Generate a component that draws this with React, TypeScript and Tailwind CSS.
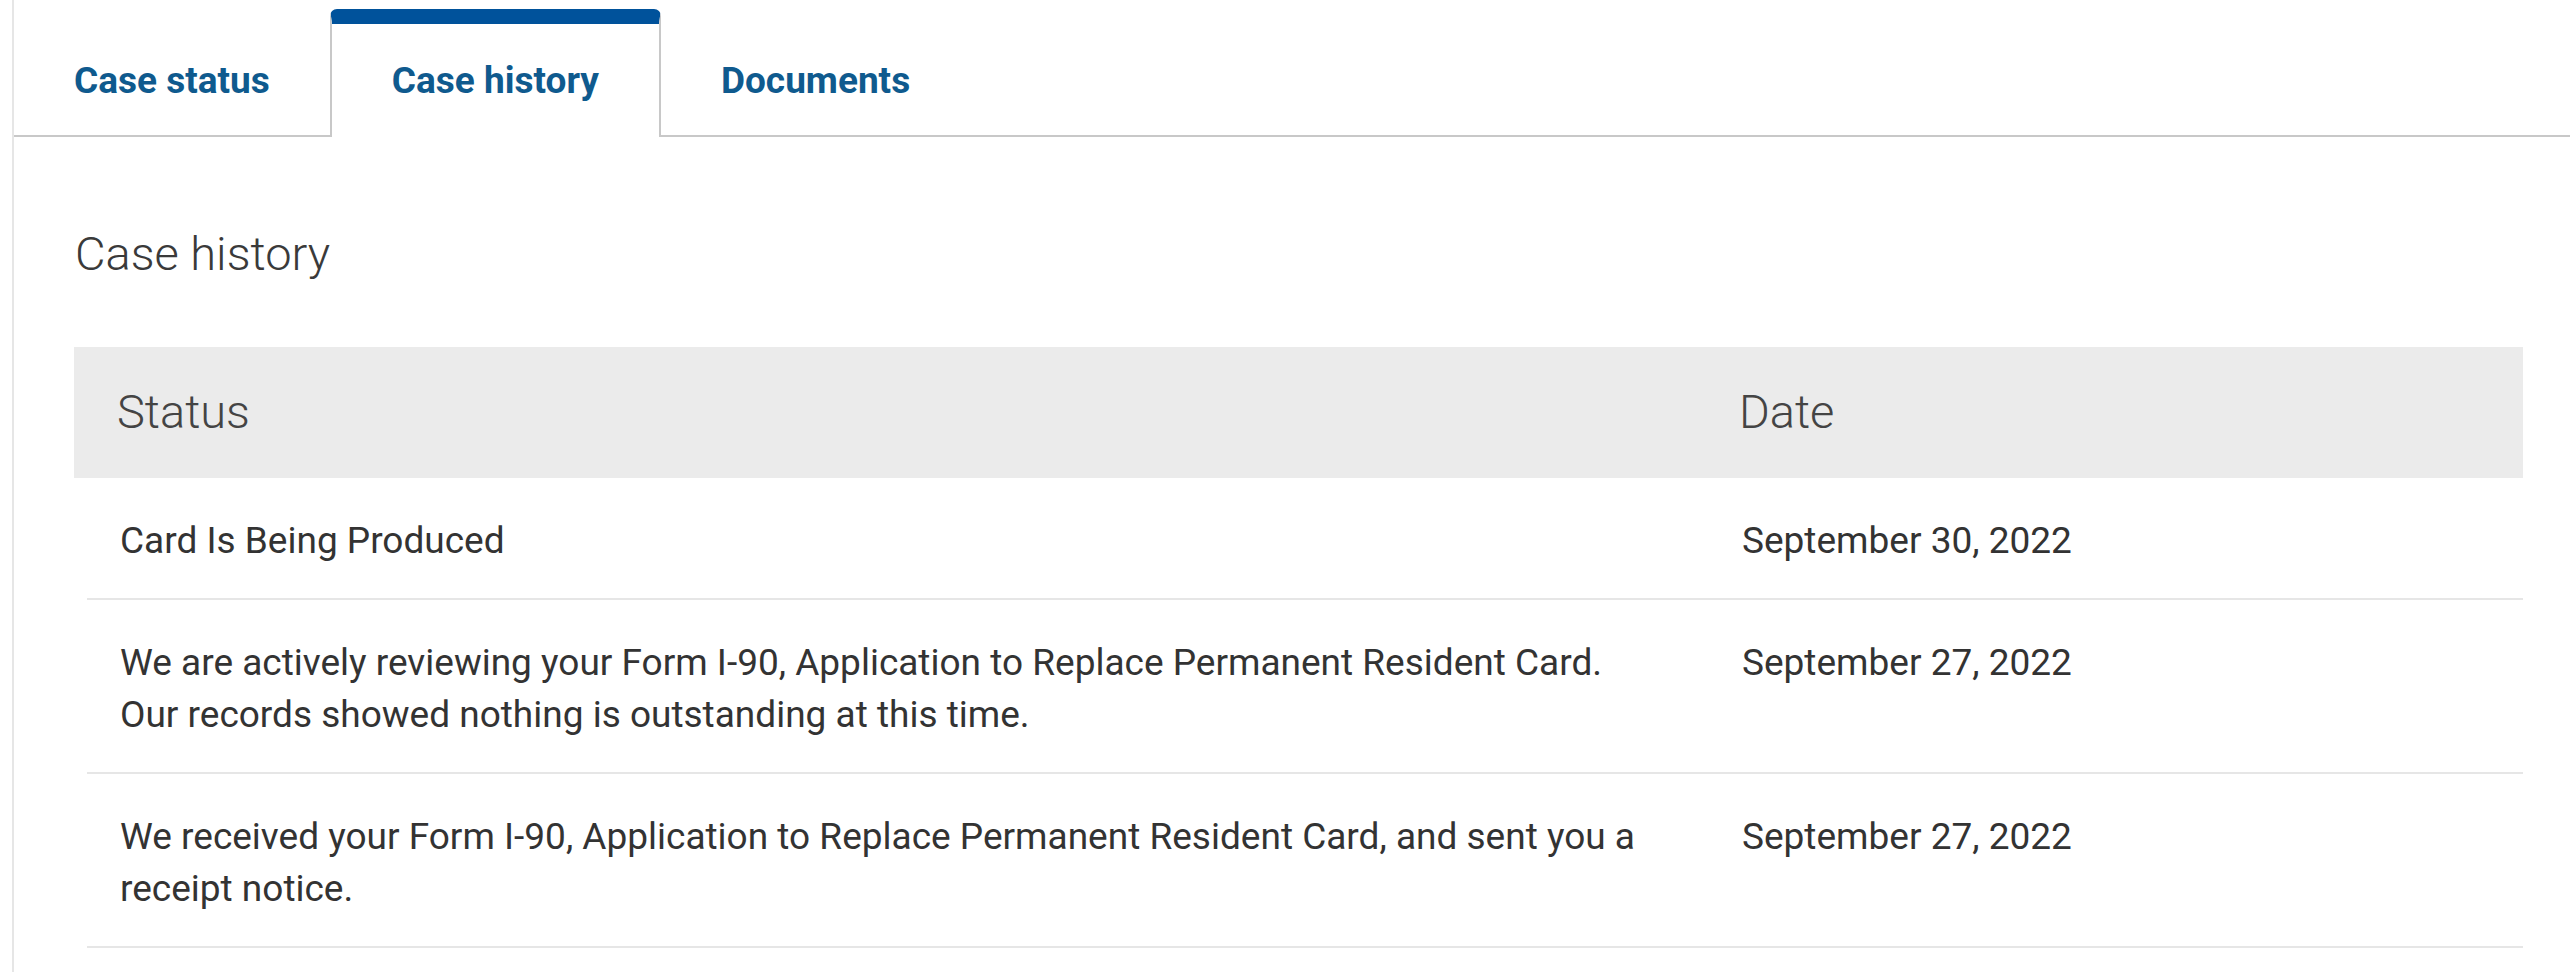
import React from 'react';

const tabs = ['Case status', 'Case history', 'Documents'];

const rows = [
  { status: 'Card Is Being Produced', date: 'September 30, 2022' },
  {
    status:
      'We are actively reviewing your Form I-90, Application to Replace Permanent Resident Card. Our records showed nothing is outstanding at this time.',
    date: 'September 27, 2022',
  },
  {
    status:
      'We received your Form I-90, Application to Replace Permanent Resident Card, and sent you a receipt notice.',
    date: 'September 27, 2022',
  },
];

export default function App() {
  const active = 'Case history';

  return (
    <div className="min-h-[972px] bg-white font-['Roboto','Liberation_Sans',sans-serif]">
      <div className="ml-[12px] min-h-[972px] border-l-2 border-[#e6e6e6]">
        {/* tabs */}
        <div className="flex pt-[9px] border-b-2 border-[#c8c8c8]">
          {tabs.map((tab) =>
            tab === active ? (
              <div
                key={tab}
                className="-mb-[2px] flex h-[128px] items-center rounded-t-[7px] border-x-2 border-t-[15px] border-x-[#c8c8c8] border-t-[#00529b] bg-white px-[60px] text-[37px] font-bold text-[#0f5a8e]"
              >
                {tab}
              </div>
            ) : (
              <div
                key={tab}
                className="-mb-[2px] flex h-[128px] items-center border-t-[15px] border-transparent px-[60px] text-[37px] font-bold text-[#0f5a8e]"
              >
                {tab}
              </div>
            )
          )}
        </div>

        <div className="pl-[60px] pr-[47px]">
          <h2 className="ml-px mt-[91px] text-[47px] font-light leading-[52px] text-[#3a3a3a]">
            Case history
          </h2>

          <div className="mt-[67px]">
            <div className="grid h-[131px] grid-cols-[1665px_1fr] items-center bg-[#ebebeb] text-[47px] font-light text-[#444]">
              <div className="pl-[43px]">Status</div>
              <div>Date</div>
            </div>

            <div className="ml-[13px]">
              {rows.map((row, i) => (
                <div
                  key={i}
                  className="grid grid-cols-[1655px_1fr] border-b-2 border-[#e6e6e6] pt-[37px] pb-[31px] text-[37px] leading-[52px] text-[#333]"
                >
                  <div className="pl-[33px] pr-[87px]">{row.status}</div>
                  <div>{row.date}</div>
                </div>
              ))}
            </div>
          </div>
        </div>
      </div>
    </div>
  );
}
